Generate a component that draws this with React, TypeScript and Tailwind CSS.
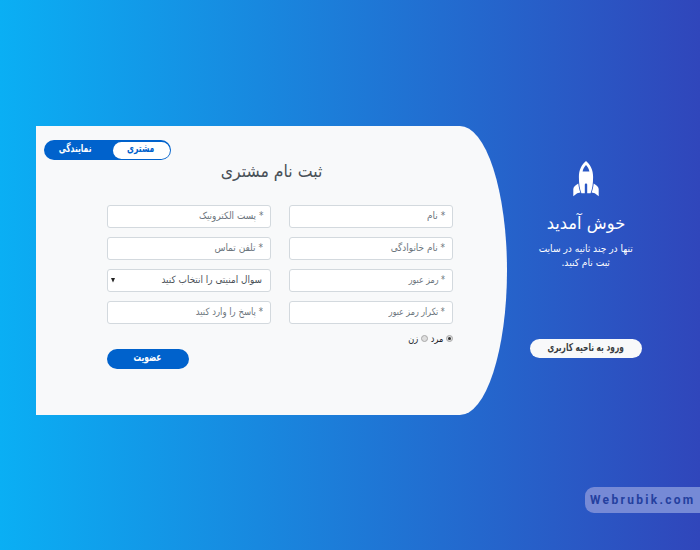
import React from 'react';

function Field({ label, fit = 'scale-x-90' }: { label: string; fit?: string }) {
  return (
    <div className="flex h-[23px] items-center rounded-[3px] border border-[#d3d9de] bg-white pr-[7px] text-[10px] leading-none text-[#6c757d]">
      <span className={`mb-[2px] origin-right whitespace-nowrap ${fit}`}>{label}</span>
    </div>
  );
}

function SelectField({ label }: { label: string }) {
  return (
    <div className="flex h-[23px] items-center justify-between rounded-[3px] border border-[#d3d9de] bg-white pr-[8px] pl-[3px] text-[10px] leading-none text-[#495057]">
      <span className="mb-[2px] origin-right scale-x-[.89] whitespace-nowrap">{label}</span>
      <svg width="4" height="5" viewBox="0 0 4 5" className="fill-[#222]">
        <path d="M0 0h4L2 4.6z" />
      </svg>
    </div>
  );
}

function Radio({ checked }: { checked?: boolean }) {
  return (
    <span className="mb-[3px] flex size-[7px] shrink-0 items-center justify-center rounded-full border border-[#a9a9a9] bg-[#dedede]">
      {checked && <span className="size-[3px] rounded-full bg-[#333]" />}
    </span>
  );
}

function Rocket() {
  return (
    <svg width="26" height="36" viewBox="0 0 26 36" className="fill-white">
      <path
        fillRule="evenodd"
        d="M13 0C17.400 3.400 20.100 9 20.100 16C20.100 22.500 19.300 28 17.600 32.300H14.200V23.500C14.200 22 11.800 22 11.800 23.500V32.300H8.400C6.700 28 5.900 22.500 5.900 16C5.900 9 8.600 3.400 13 0ZM13 4C11.300 5.800 10 8 9.600 10.600H16.400C16 8 14.700 5.800 13 4Z"
      />
      <path d="M5.300 22.500C5.700 26 6.300 29 7.400 31.400L4.200 32.200L0.300 35.200V28C0.300 25.600 2.800 24.300 5.300 22.500ZM20.700 22.500C20.300 26 19.700 29 18.600 31.400L21.800 32.200L25.700 35.200V28C25.700 25.600 23.200 24.300 20.700 22.500Z" />
    </svg>
  );
}

export default function App() {
  return (
    <div
      dir="rtl"
      className="relative flex h-[550px] w-[700px] overflow-hidden bg-linear-to-r/srgb from-[#0aaff4] to-[#3046bb] px-9 pt-[126px] font-['DejaVu_Sans',sans-serif]"
    >
      <aside className="flex w-[157px] flex-col items-center pt-[35px] text-white">
        <Rocket />
        <h3 className="mt-[13px] scale-x-[.96] text-[17px] leading-[26px] whitespace-nowrap">خوش آمدید</h3>
        <p className="mt-[6px] scale-x-[.91] text-center text-[10px] leading-[14px] whitespace-nowrap">
          تنها در چند ثانیه در سایت
          <br />
          ثبت نام کنید.
        </p>
        <button className="mt-[69px] flex h-[19px] w-[112px] justify-center rounded-full bg-[#f8f9fa] text-[11px] leading-[17px] font-bold whitespace-nowrap text-[#383d41]">
          <span className="-mx-2 shrink-0 scale-x-[.675]">ورود به ناحیه کاربری</span>
        </button>
      </aside>
      <main className="h-[289px] w-[471px] rounded-r-[10%_50%] bg-[#f8f9fa] pt-[14px]">
        <div className="mr-[336px] flex h-[20px] w-[127px] items-stretch rounded-full bg-[#0062cc] p-[1.500px] text-[11px] leading-[14px] font-bold">
          <span className="flex w-[57px] justify-center rounded-full bg-white text-[#0062cc]">
            <span className="scale-x-[.69]">مشتری</span>
          </span>
          <span className="flex flex-1 justify-center pr-[7px] text-white">
            <span className="scale-x-[.68]">نمایندگی</span>
          </span>
        </div>
        <h3 className="-mt-px scale-x-[.925] text-center text-[17px] leading-[24px] text-[#495057]">ثبت نام مشتری</h3>
        <div className="mt-[22px] mr-[54px] grid w-[346px] grid-cols-[164px_164px] gap-x-[18px] gap-y-[9px]">
          <Field label="* نام" />
          <Field label="* پست الکترونیک" fit="scale-x-[.89]" />
          <Field label="* نام خانوادگی" fit="scale-x-[.89]" />
          <Field label="* تلفن تماس" />
          <Field label="* رمز عبور" fit="scale-x-[.79]" />
          <SelectField label="سوال امنیتی را انتخاب کنید" />
          <Field label="* تکرار رمز عبور" fit="scale-x-[.79]" />
          <Field label="* پاسخ را وارد کنید" fit="scale-x-[.85]" />
          <div className="flex h-[14px] items-center text-[10px] leading-none text-[#212529]">
            <Radio checked />
            <span className="mr-[3px] mb-[2px] flex w-[15px]">
              <span className="origin-right scale-x-[.82]">مرد</span>
            </span>
            <Radio />
            <span className="mr-[3px] mb-[2px] origin-right scale-x-[.82]">زن</span>
          </div>
          <button className="mt-[16px] mr-[82px] flex h-[20px] w-[82px] justify-center rounded-full bg-[#0062cc] text-[11px] leading-[18px] font-bold text-white">
            <span className="scale-x-[.68]">عضویت</span>
          </button>
        </div>
      </main>
      <div
        dir="ltr"
        className="absolute top-[487px] right-0 h-[26px] w-[115px] rounded-l-[9px] bg-[#768ad6] pl-[5px] font-[Roboto,sans-serif] text-[12px] leading-[27px] font-bold tracking-[2.300px] text-[#24409f]"
      >
        Webrubik.com
      </div>
    </div>
  );
}
